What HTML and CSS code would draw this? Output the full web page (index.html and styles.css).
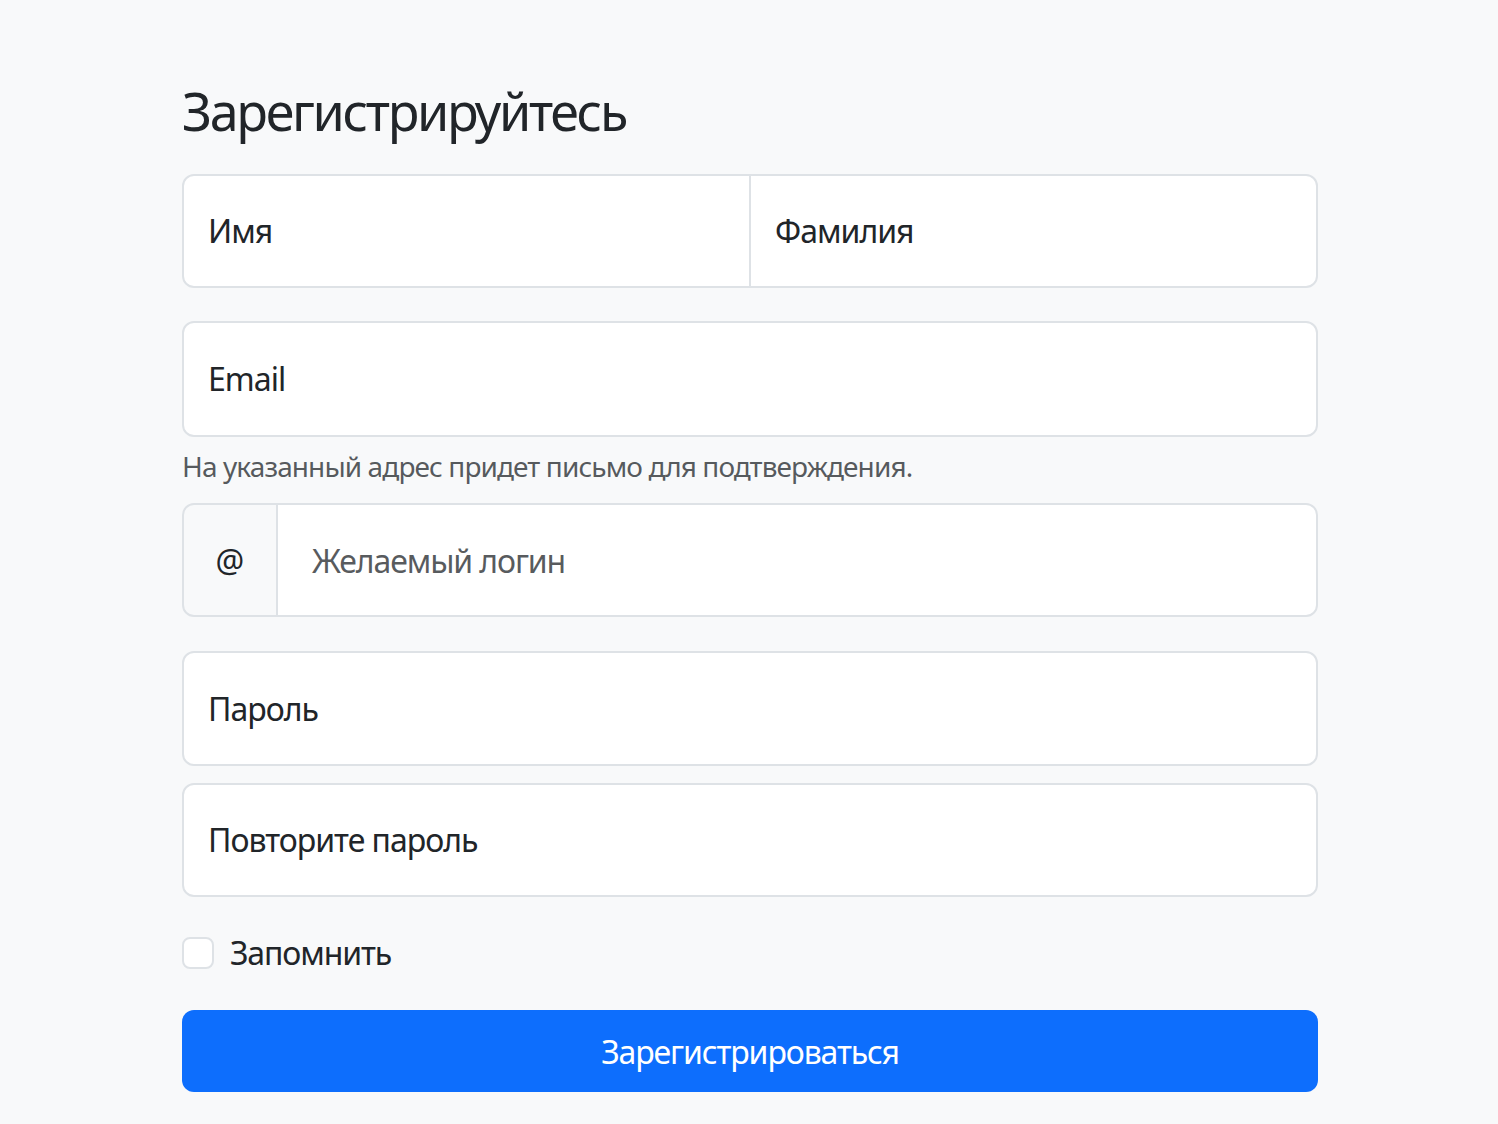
FILE: index.html
```html
<!DOCTYPE html>
<html lang="ru">
<head>
<meta charset="utf-8">
<title>Регистрация</title>
<link rel="stylesheet" href="styles.css">
</head>
<body>
<main class="signup">
  <h1 class="title">Зарегистрируйтесь</h1>

  <div class="group pair">
    <div class="field field-left"><label class="flabel">Имя</label></div>
    <div class="field field-right"><label class="flabel">Фамилия</label></div>
  </div>

  <div class="field field-email"><label class="flabel">Email</label></div>
  <p class="help">На указанный адрес придет письмо для подтверждения.</p>

  <div class="group login">
    <span class="addon">@</span>
    <div class="field field-right field-login"><span class="placeholder">Желаемый логин</span></div>
  </div>

  <div class="field field-pass"><label class="flabel">Пароль</label></div>
  <div class="field field-repeat"><label class="flabel">Повторите пароль</label></div>

  <div class="check">
    <span class="box"></span>
    <span class="check-label">Запомнить</span>
  </div>

  <button class="submit" type="button">Зарегистрироваться</button>
</main>
</body>
</html>
```

FILE: styles.css
```css
html, body {
  margin: 0;
  padding: 0;
}
body {
  background: #f8f9fa;
  color: #212529;
  font-family: "Noto Sans", "Open Sans", sans-serif;
}
.signup {
  width: 1136px;
  margin: 0 auto;
  padding: 77px 0 0 2px;
}
.title {
  font-size: 52px;
  line-height: 67px;
  font-weight: 400;
  letter-spacing: -2.3px;
  margin: 0 0 30px;
}
.group {
  display: flex;
}
.field {
  background: #fff;
  border: 2px solid #dee2e6;
  border-radius: 12px;
  box-sizing: border-box;
  display: flex;
  align-items: center;
  padding: 0 24px;
}
.flabel {
  font-size: 32px;
  line-height: 48px;
  letter-spacing: -1px;
  color: #212529;
}
.pair .field {
  flex: 1;
  height: 114px;
}
.field-left {
  border-top-right-radius: 0;
  border-bottom-right-radius: 0;
}
.field-right {
  border-top-left-radius: 0;
  border-bottom-left-radius: 0;
  margin-left: -2px;
}
.pair {
  margin-bottom: 33px;
}
.field-email {
  height: 116px;
}
.help {
  margin: 8px 0 16px;
  font-size: 28px;
  line-height: 42px;
  letter-spacing: -0.9px;
  color: rgba(33, 37, 41, 0.75);
}
.login {
  height: 114px;
  margin-bottom: 34px;
}
.addon {
  width: 96px;
  box-sizing: border-box;
  background: #f8f9fa;
  border: 2px solid #dee2e6;
  border-radius: 12px 0 0 12px;
  display: flex;
  align-items: center;
  justify-content: center;
  font-size: 32px;
  color: #212529;
}
.field-login {
  flex: 1;
  padding-left: 34px;
}
.placeholder {
  font-size: 32px;
  letter-spacing: -1.1px;
  color: rgba(33, 37, 41, 0.75);
}
.field-pass {
  height: 115px;
  margin-bottom: 17px;
}
.field-repeat {
  height: 114px;
}
.check {
  display: flex;
  align-items: center;
  height: 48px;
  margin: 32px 0 33px;
}
.box {
  width: 32px;
  height: 32px;
  box-sizing: border-box;
  border: 2px solid #dee2e6;
  border-radius: 8px;
  background: #fff;
  margin-right: 16px;
}
.check-label {
  font-size: 32px;
  line-height: 48px;
  letter-spacing: -1.1px;
}
.submit {
  display: block;
  width: 100%;
  height: 82px;
  border: 0;
  border-radius: 12px;
  background: #0d6efd;
  color: #fff;
  font-family: inherit;
  font-size: 32px;
  letter-spacing: -1.1px;
  cursor: pointer;
}
```
